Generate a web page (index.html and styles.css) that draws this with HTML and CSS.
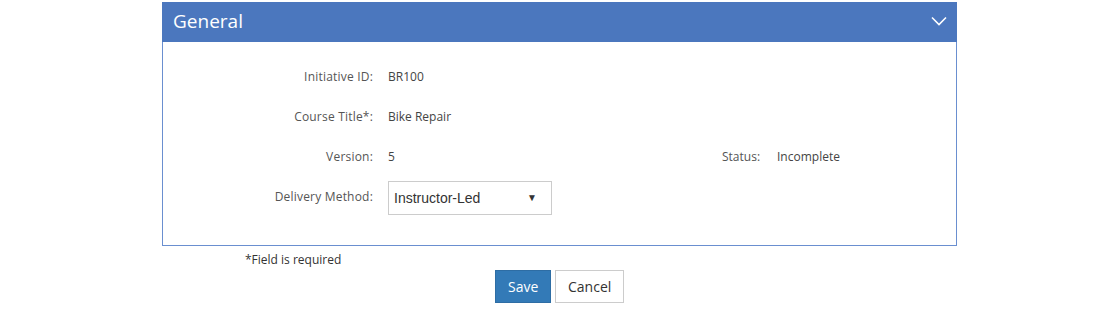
FILE: index.html
```html
<!DOCTYPE html>
<html>
<head>
<meta charset="utf-8">
<link rel="stylesheet" href="styles.css">
</head>
<body>
<div class="page">
  <section class="panel">
    <header class="panel-head">
      <span class="panel-title">General</span>
      <svg class="chev" width="16" height="10" viewBox="0 0 16 10"><polyline points="1,1.5 8,8.5 15,1.5" fill="none" stroke="#fff" stroke-width="1.6"/></svg>
    </header>
    <div class="panel-body">
      <div class="row">
        <span class="label">Initiative ID:</span>
        <span class="value">BR100</span>
      </div>
      <div class="row">
        <span class="label">Course Title*:</span>
        <span class="value">Bike Repair</span>
      </div>
      <div class="row">
        <span class="label">Version:</span>
        <span class="value value-wide">5</span>
        <span class="status-label">Status:</span>
        <span class="value">Incomplete</span>
      </div>
      <div class="row">
        <span class="label">Delivery Method:</span>
        <div class="select">
          <span>Instructor-Led</span>
          <span class="arrow">▼</span>
        </div>
      </div>
    </div>
  </section>
  <div class="note">*Field is required</div>
  <div class="actions">
    <button class="btn btn-primary">Save</button>
    <button class="btn btn-default">Cancel</button>
  </div>
</div>
</body>
</html>
```
FILE: styles.css
```css
html, body {
  margin: 0;
  padding: 0;
  background: #fff;
}
body {
  font-family: "Open Sans", "DejaVu Sans", sans-serif;
  color: #333;
}
.page {
  width: 795px;
  margin: 2px 0 0 calc(50% - 398px);
}
.panel {
  border: 1px solid #6a8fd0;
  border-top: none;
}
.panel-head {
  height: 40px;
  background: #4b77be;
  color: #fff;
  display: flex;
  align-items: center;
  justify-content: space-between;
  padding: 0 10px 0 11px;
  margin: 0 -1px;
}
.panel-title {
  font-size: 19px;
  line-height: 1;
  position: relative;
  top: -1px;
}
.chev {
  display: block;
  margin-top: -3px;
}
.panel-body {
  padding: 14px 0 29px;
}
.row {
  display: flex;
  align-items: center;
  height: 40px;
  font-size: 12px;
}
.label {
  width: 210px;
  text-align: right;
  color: #555;
  margin-right: 15px;
  letter-spacing: 0.2px;
}
.value {
  color: #444;
}
.value-wide {
  width: 334px;
}
.status-label {
  color: #555;
  width: 40px;
  margin-right: 15px;
}
.select {
  width: 164px;
  height: 34px;
  box-sizing: border-box;
  border: 1px solid #ccc;
  display: flex;
  align-items: center;
  justify-content: space-between;
  padding: 0 14px 0 5px;
  font-family: "Liberation Sans", Arial, sans-serif;
  font-size: 14px;
  color: #333;
  margin-top: 3px;
}
.arrow {
  font-size: 10px;
}
.note {
  font-size: 12px;
  padding-left: 83px;
  margin-top: 6px;
  line-height: 16px;
  color: #333;
}
.actions {
  display: flex;
  justify-content: center;
  gap: 4px;
  margin-top: 2px;
}
.btn {
  font-family: "Open Sans", "DejaVu Sans", sans-serif;
  font-size: 14px;
  height: 33px;
  padding: 0 12px;
  border: 1px solid;
  border-radius: 0;
  cursor: pointer;
}
.btn-primary {
  background: #337ab7;
  border-color: #2e6da4;
  color: #fff;
  width: 56px;
}
.btn-default {
  background: #fff;
  border-color: #ccc;
  color: #333;
  width: 69px;
}
```
